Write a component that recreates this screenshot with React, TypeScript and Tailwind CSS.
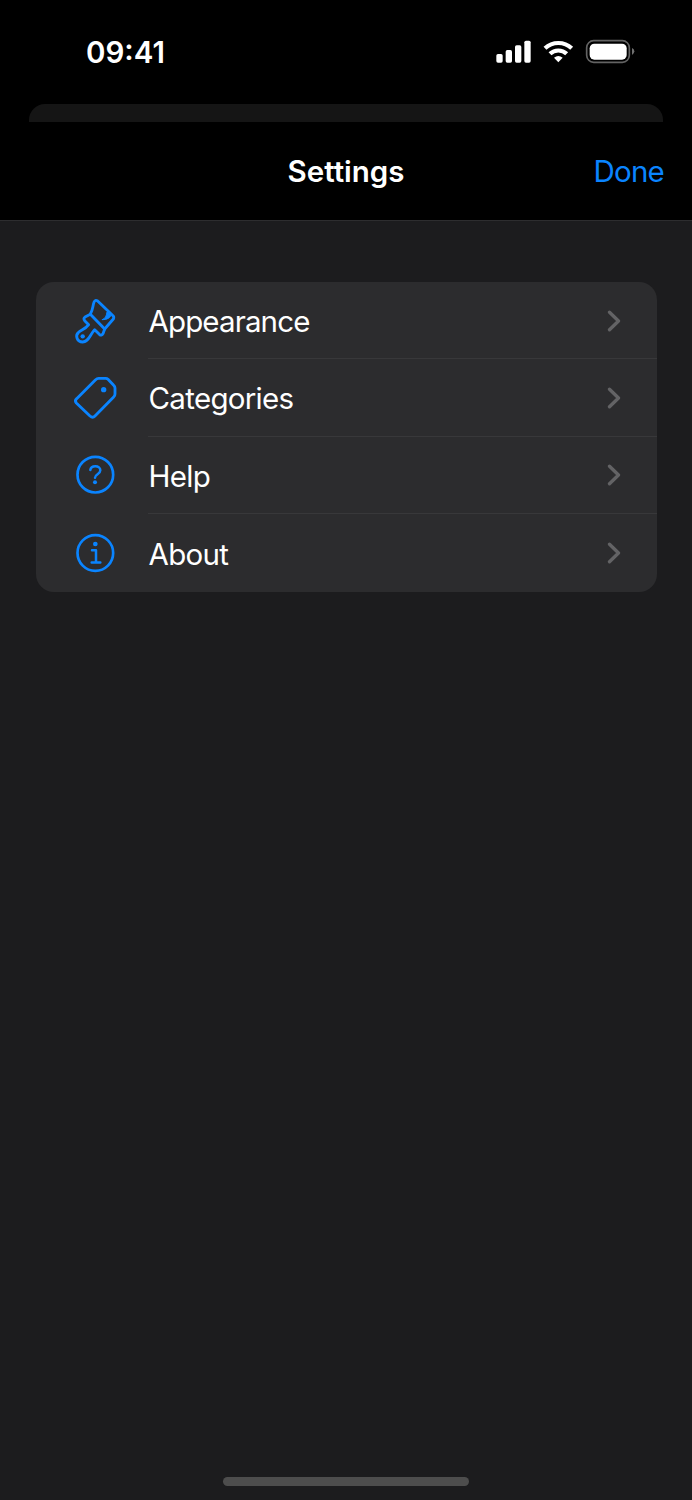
import React from 'react';

const BrushIcon: React.FC = () => (
  <svg className="size-12" viewBox="36 35 144 144" fill="none" stroke="currentColor" strokeWidth="8.5" strokeLinejoin="round" strokeLinecap="round">
    <path d="M91 86C99 73 98 61 102 51Q105 42 113 47L159 91Q163 95 160 101L134 131" />
    <path d="M91 87L134 131L129 145Q125 153 118 147L104 133Q98 140 93 148C87 158 83 169 68 170C51 170 45 151 55 142C62 134 75 133 86 118L74 106Q69 100 75 95Z" />
    <path d="M127 103C136 99 139 93 141 80L154 88C151 97 142 103 127 103Z" fill="currentColor" strokeWidth="3" />
    <circle cx="68" cy="153" r="6.5" fill="currentColor" stroke="none" />
  </svg>
);

const TagIcon: React.FC = () => (
  <svg className="size-12" viewBox="36 27 144 144" fill="none" stroke="currentColor" strokeWidth="8.5" strokeLinejoin="round">
    <path d="M116 40H137Q141 40 144 43L161 61Q165 65 165 69V87Q165 92 161 96L105 153Q98 160 90 153L49 114Q43 107 50 101L106 45Q111 40 116 40Z" />
    <circle cx="131" cy="74" r="8" fill="currentColor" stroke="none" />
  </svg>
);

const HelpIcon: React.FC = () => (
  <svg className="size-12" viewBox="36 20 144 144" fill="none" stroke="currentColor" strokeLinecap="round" strokeLinejoin="round">
    <circle cx="106" cy="91" r="53.5" strokeWidth="8" />
    <path d="M91 77C92 69 98 66 106 66C115 66 121 71 121 78C121 90 105 89 105 100" strokeWidth="7.5" />
    <circle cx="105" cy="113.5" r="6" fill="currentColor" stroke="none" />
  </svg>
);

const InfoIcon: React.FC = () => (
  <svg className="size-12" viewBox="36 251 144 144" fill="none" stroke="currentColor" strokeLinecap="round" strokeLinejoin="round">
    <circle cx="106" cy="323" r="53.5" strokeWidth="8" />
    <path d="M96 315H108V351M95 351.5H121" strokeWidth="7.5" />
    <circle cx="106" cy="296" r="7" fill="currentColor" stroke="none" />
  </svg>
);

const Chevron: React.FC = () => (
  <svg className="h-[22px] w-4" viewBox="0 0 16 22" fill="none" stroke="currentColor" strokeWidth="3.3" strokeLinecap="round" strokeLinejoin="round">
    <path d="M3.5 2.2L12.5 11L3.5 19.8" />
  </svg>
);

const StatusIcons: React.FC = () => (
  <svg className="h-[55px] w-[170px]" viewBox="0 0 510 165" fill="white">
    <rect x="49" y="87" width="19" height="26" rx="5" />
    <rect x="77" y="75" width="19" height="38" rx="5" />
    <rect x="105" y="61" width="19" height="52" rx="5" />
    <rect x="133" y="47" width="19" height="66" rx="5" />
    <path d="M195 70A58 58 0 0 1 275 70M210 86.5A36 36 0 0 1 260 86.5" fill="none" stroke="white" strokeWidth="12.5" />
    <path d="M222 98A21 21 0 0 1 248 98L235 112Z" />
    <rect x="320" y="47" width="128" height="65" rx="21" fill="none" stroke="#636363" strokeWidth="5" />
    <rect x="329" y="56" width="111" height="48" rx="14" />
    <path d="M456 69Q463 72 463 79T456 90Z" fill="#707070" />
  </svg>
);

const ITEMS = [
  { label: 'Appearance', icon: BrushIcon, tracking: 'tracking-[-0.87px]' },
  { label: 'Categories', icon: TagIcon, tracking: 'tracking-[-0.7px]' },
  { label: 'Help', icon: HelpIcon, tracking: 'tracking-[-0.7px]' },
  { label: 'About', icon: InfoIcon, tracking: 'tracking-[-0.7px]' },
];

const App: React.FC = () => {
  return (
    <div className="flex h-[1500px] w-[692px] flex-col bg-[#1c1c1e] font-['Inter',sans-serif] text-[29.5px] text-white">
      {/* Status bar */}
      <div className="flex h-[104px] shrink-0 items-start justify-between bg-black pr-[42px] pl-[86px]">
        <span className="pt-[33px] leading-[38px] font-semibold">09:41</span>
        <div className="pt-[25px]">
          <StatusIcons />
        </div>
      </div>

      {/* Edge of the screen behind the sheet */}
      <div className="shrink-0 bg-black px-[29px]">
        <div className="h-[17.5px] rounded-t-[16px] bg-[#151515]" />
      </div>

      {/* Navigation bar */}
      <header className="grid h-[99.5px] shrink-0 grid-cols-3 items-center border-b border-[#2d2d2f] bg-black px-7">
        <h1 className="col-start-2 text-center font-semibold">Settings</h1>
        <button className="pt-px text-right tracking-[-0.8px] text-[#0a84ff]">Done</button>
      </header>

      <main className="flex-1 px-[35.5px] pt-[61px]">
        <ul className="w-[621px] overflow-hidden rounded-[18px] bg-[#2c2c2e]">
          {ITEMS.map(({ label, icon: Icon, tracking }, index) => (
            <li key={label} className="flex h-[77.4px] items-center pl-[36.5px]">
              <span className="text-[#0a84ff]">
                <Icon />
              </span>
              <div
                className={
                  index < ITEMS.length - 1
                    ? 'ml-7 flex h-full flex-1 items-center justify-between border-b-[1.5px] border-[#38383a] pr-[34.5px]'
                    : 'ml-7 flex h-full flex-1 items-center justify-between pr-[34.5px]'
                }
              >
                <span className={`pt-0.5 pl-[0.5px] ${tracking}`}>{label}</span>
                <span className="pt-px text-[#636365]">
                  <Chevron />
                </span>
              </div>
            </li>
          ))}
        </ul>
      </main>

      {/* Home indicator */}
      <div className="flex h-[23.5px] shrink-0 justify-center">
        <div className="h-[9px] w-[246px] rounded-full bg-[#4d4d4d]" />
      </div>
    </div>
  );
};

export default App;
